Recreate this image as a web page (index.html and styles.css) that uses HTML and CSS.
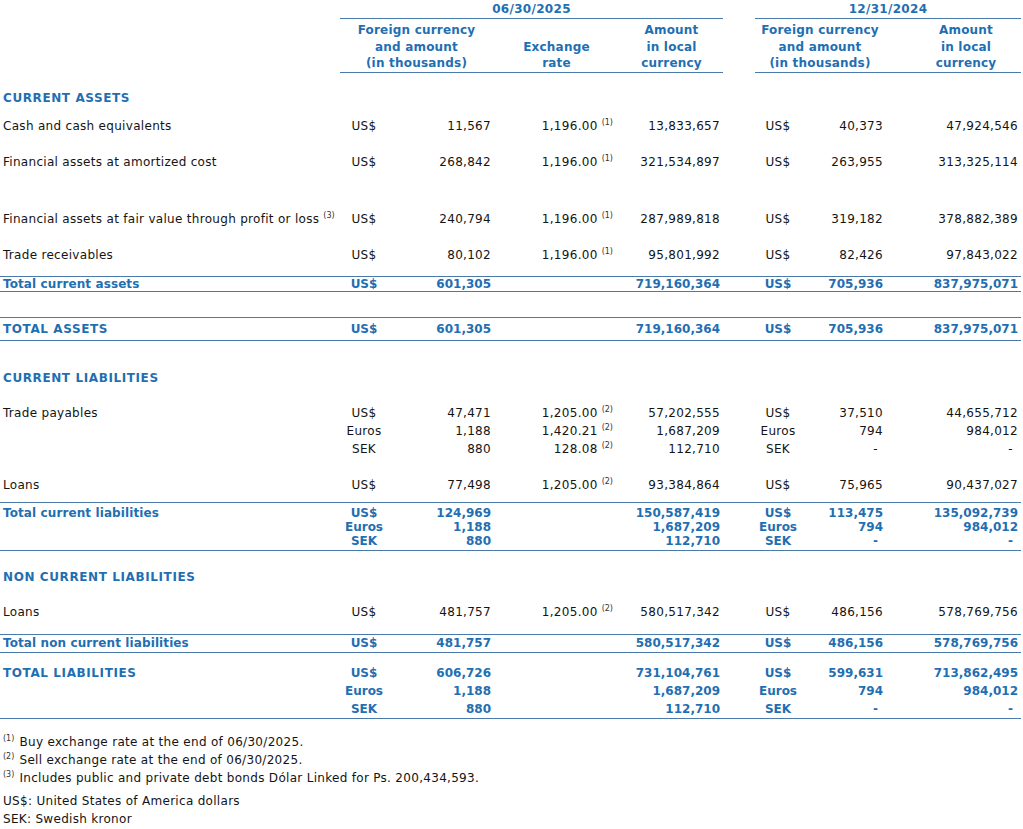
FILE: index.html
```html
<!DOCTYPE html>
<html>
<head>
    <title>Foreign currency assets and liabilities</title>
    <link rel="stylesheet" href="styles.css">
</head>
<body>

    <table class="fx">
        <colgroup>
            <col class="c-label">
            <col class="c-cur">
            <col class="c-amt">
            <col class="c-rate">
            <col class="c-local">
            <col class="c-gap">
            <col class="c-cur2">
            <col class="c-amt2">
            <col class="c-local2">
        </colgroup>

        <!-- column headers -->
        <tr class="period">
            <td></td>
            <td colspan="4" class="rule">06/30/2025</td>
            <td></td>
            <td colspan="3" class="rule">12/31/2024</td>
        </tr>
        <tr class="heads">
            <td></td>
            <td colspan="2" class="rule">Foreign currency<br>and amount<br>(in thousands)</td>
            <td class="rule">Exchange<br>rate</td>
            <td class="rule">Amount<br>in local<br>currency</td>
            <td></td>
            <td colspan="2" class="rule">Foreign currency<br>and amount<br>(in thousands)</td>
            <td class="rule last-head">Amount<br>in local<br>currency</td>
        </tr>

        <!-- current assets -->
        <tr class="section">
            <td colspan="9">CURRENT ASSETS</td>
        </tr>
        <tr class="item first">
            <td class="label">Cash and cash equivalents</td>
            <td class="cur">US$</td><td class="num">11,567</td>
            <td class="rate">1,196.00<sup>(1)</sup></td><td class="num local">13,833,657</td>
            <td></td>
            <td class="cur">US$</td><td class="num">40,373</td><td class="num local">47,924,546</td>
        </tr>
        <tr class="item">
            <td class="label">Financial assets at amortized cost</td>
            <td class="cur">US$</td><td class="num">268,842</td>
            <td class="rate">1,196.00<sup>(1)</sup></td><td class="num local">321,534,897</td>
            <td></td>
            <td class="cur">US$</td><td class="num">263,955</td><td class="num local">313,325,114</td>
        </tr>
        <tr class="item far">
            <td class="label">Financial assets at fair value through profit or loss<sup>(3)</sup></td>
            <td class="cur">US$</td><td class="num">240,794</td>
            <td class="rate">1,196.00<sup>(1)</sup></td><td class="num local">287,989,818</td>
            <td></td>
            <td class="cur">US$</td><td class="num">319,182</td><td class="num local">378,882,389</td>
        </tr>
        <tr class="item before-assets-total">
            <td class="label">Trade receivables</td>
            <td class="cur">US$</td><td class="num">80,102</td>
            <td class="rate">1,196.00<sup>(1)</sup></td><td class="num local">95,801,992</td>
            <td></td>
            <td class="cur">US$</td><td class="num">82,426</td><td class="num local">97,843,022</td>
        </tr>
        <tr class="total">
            <td class="label">Total current assets</td>
            <td class="cur">US$</td><td class="num">601,305</td>
            <td></td><td class="num local">719,160,364</td>
            <td></td>
            <td class="cur">US$</td><td class="num">705,936</td><td class="num local">837,975,071</td>
        </tr>
        <tr class="spacer"><td colspan="9"></td></tr>
        <tr class="total grand">
            <td class="label caps">TOTAL ASSETS</td>
            <td class="cur">US$</td><td class="num">601,305</td>
            <td></td><td class="num local">719,160,364</td>
            <td></td>
            <td class="cur">US$</td><td class="num">705,936</td><td class="num local">837,975,071</td>
        </tr>

        <!-- current liabilities -->
        <tr class="section wide">
            <td colspan="9">CURRENT LIABILITIES</td>
        </tr>
        <tr class="item near">
            <td class="label">Trade payables</td>
            <td class="cur">US$</td><td class="num">47,471</td>
            <td class="rate">1,205.00<sup>(2)</sup></td><td class="num local">57,202,555</td>
            <td></td>
            <td class="cur">US$</td><td class="num">37,510</td><td class="num local">44,655,712</td>
        </tr>
        <tr class="sub">
            <td></td>
            <td class="cur">Euros</td><td class="num">1,188</td>
            <td class="rate">1,420.21<sup>(2)</sup></td><td class="num local">1,687,209</td>
            <td></td>
            <td class="cur">Euros</td><td class="num">794</td><td class="num local">984,012</td>
        </tr>
        <tr class="sub tall">
            <td></td>
            <td class="cur">SEK</td><td class="num">880</td>
            <td class="rate">128.08<sup>(2)</sup></td><td class="num local">112,710</td>
            <td></td>
            <td class="cur">SEK</td><td class="num"><span class="dash">-</span></td><td class="num local"><span class="dash">-</span></td>
        </tr>
        <tr class="item near before-cl-total">
            <td class="label">Loans</td>
            <td class="cur">US$</td><td class="num">77,498</td>
            <td class="rate">1,205.00<sup>(2)</sup></td><td class="num local">93,384,864</td>
            <td></td>
            <td class="cur">US$</td><td class="num">75,965</td><td class="num local">90,437,027</td>
        </tr>
        <tr class="total stacked">
            <td class="label">Total current liabilities</td>
            <td class="cur">US$<br>Euros<br>SEK</td>
            <td class="num">124,969<br>1,188<br>880</td>
            <td></td>
            <td class="num local">150,587,419<br>1,687,209<br>112,710</td>
            <td></td>
            <td class="cur">US$<br>Euros<br>SEK</td>
            <td class="num">113,475<br>794<br><span class="dash">-</span></td>
            <td class="num local">135,092,739<br>984,012<br><span class="dash">-</span></td>
        </tr>

        <!-- non current liabilities -->
        <tr class="section after-stack">
            <td colspan="9">NON CURRENT LIABILITIES</td>
        </tr>
        <tr class="item near before-ncl-total">
            <td class="label">Loans</td>
            <td class="cur">US$</td><td class="num">481,757</td>
            <td class="rate">1,205.00<sup>(2)</sup></td><td class="num local">580,517,342</td>
            <td></td>
            <td class="cur">US$</td><td class="num">486,156</td><td class="num local">578,769,756</td>
        </tr>
        <tr class="total ncl">
            <td class="label">Total non current liabilities</td>
            <td class="cur">US$</td><td class="num">481,757</td>
            <td></td><td class="num local">580,517,342</td>
            <td></td>
            <td class="cur">US$</td><td class="num">486,156</td><td class="num local">578,769,756</td>
        </tr>
        <tr class="total liabilities">
            <td class="label caps">TOTAL LIABILITIES</td>
            <td class="cur">US$<br>Euros<br>SEK</td>
            <td class="num">606,726<br>1,188<br>880</td>
            <td></td>
            <td class="num local">731,104,761<br>1,687,209<br>112,710</td>
            <td></td>
            <td class="cur">US$<br>Euros<br>SEK</td>
            <td class="num">599,631<br>794<br><span class="dash">-</span></td>
            <td class="num local">713,862,495<br>984,012<br><span class="dash">-</span></td>
        </tr>
    </table>

    <div class="notes">
        <p><sup>(1)</sup> Buy exchange rate at the end of 06/30/2025.</p>
        <p><sup>(2)</sup> Sell exchange rate at the end of 06/30/2025.</p>
        <p><sup>(3)</sup> Includes public and private debt bonds Dólar Linked for Ps. 200,434,593.</p>
    </div>

    <div class="legend">
        <p>US$: United States of America dollars</p>
        <p>SEK: Swedish kronor</p>
    </div>

</body>
</html>
```

FILE: styles.css
```css
/* Foreign currency statement */
body, html {
    margin: 0;
    background: #fff;
    color: #141414;
    font: 400 12px/18px "DejaVu Sans", Verdana, sans-serif;
    letter-spacing: 0.3px;
}

.fx {
    width: 1021px;
    table-layout: fixed;
    border-collapse: separate;
    border-spacing: 0;
}

.c-label { width: 340px; }
.c-cur { width: 48px; }
.c-amt { width: 105px; }
.c-rate { width: 127px; }
.c-local { width: 103px; }
.c-gap { width: 32px; }
.c-cur2 { width: 46px; }
.c-amt2 { width: 84px; }
.c-local2 { width: 136px; }

.fx td {
    padding: 0;
    vertical-align: top;
    white-space: nowrap;
}

/* headers */
.period td {
    padding-top: 1px;
    line-height: 17px;
    font-weight: 700;
    color: #1f6fb2;
    text-align: center;
    letter-spacing: 0.3px;
}

.heads td {
    padding-top: 3px;
    line-height: 16.5px;
    font-weight: 700;
    color: #1f6fb2;
    text-align: center;
    vertical-align: bottom;
    letter-spacing: 0.2px;
}

.heads td.last-head {
    padding-left: 26px;
}

.rule {
    border-bottom: 1px solid #4a7aab;
}

/* rows */
.section td {
    padding: 16px 0 0 3px;
    font-weight: 700;
    color: #1f6fb2;
    letter-spacing: 0.6px;
}

.section.wide td { padding-top: 28px; }
.section.after-stack td { padding-top: 17px; }

.item td { padding-top: 18px; }
.item.near td { padding-top: 17px; }
.item.first td { padding-top: 10px; }
.item.far td { padding-top: 39px; }
.item.before-assets-total td { padding-bottom: 12px; }
.item.before-cl-total td { padding-bottom: 8px; }
.item.before-ncl-total td { padding-bottom: 13px; }

.sub.tall td { line-height: 19px; }

.label { padding-left: 3px !important; }

.cur { text-align: center; }

.num {
    text-align: right;
    padding-right: 2px !important;
}

.num.local { padding-right: 3px !important; }

.rate {
    text-align: right;
    padding-right: 7px !important;
}

.dash { padding-right: 5px; }

sup {
    font-size: 8px;
    line-height: 0;
    vertical-align: 5px;
    margin-left: 4px;
    color: #333;
    letter-spacing: 0;
}

/* totals */
.total td {
    font-weight: 700;
    color: #1f6fb2;
    line-height: 14px;
    letter-spacing: 0;
    border-top: 1px solid #4a7aab;
    border-bottom: 1px solid #4a7aab;
}

.total td.label { letter-spacing: 0.1px; }
.total td.caps { letter-spacing: 0.6px; }

.spacer td { height: 25px; }

.total.grand td { line-height: 22px; }

.total.stacked td {
    padding-top: 3px;
    padding-bottom: 2px;
}

.total.ncl td { line-height: 17px; }

.total.liabilities td {
    border-top: none;
    padding-top: 11px;
    line-height: 18px;
}

/* footnotes */
.notes {
    margin-top: 14px;
    padding-left: 3px;
}

.notes p, .legend p {
    margin: 0;
    line-height: 18px;
}

.notes sup {
    margin-left: 0;
    margin-right: 1px;
}

.legend {
    margin-top: 5px;
    padding-left: 3px;
}
```
